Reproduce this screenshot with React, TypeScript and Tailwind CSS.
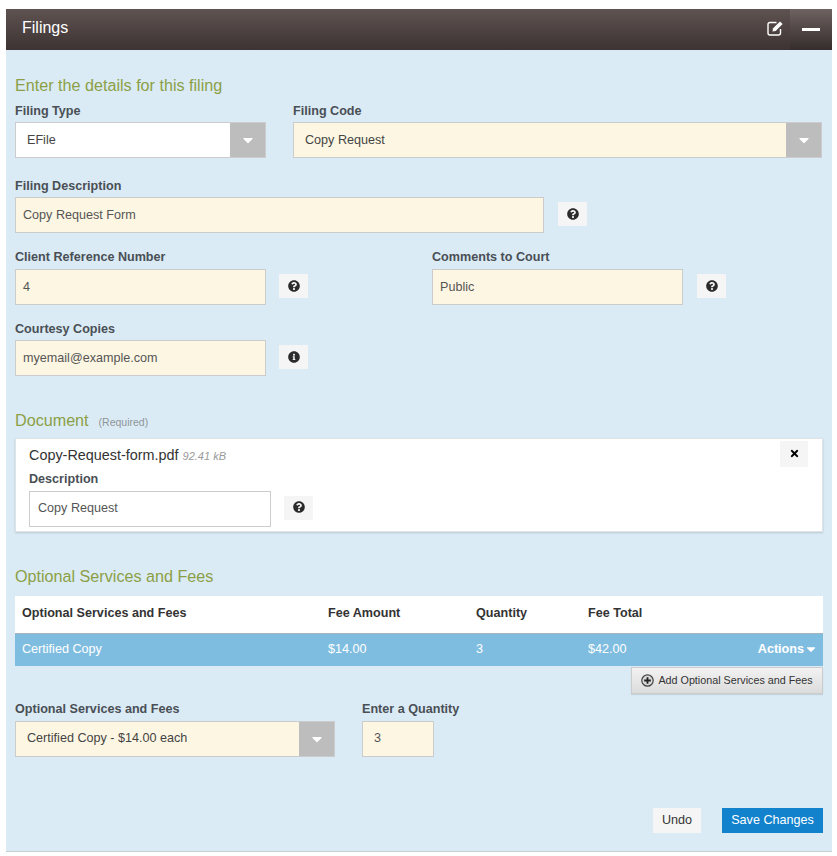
import { ReactNode } from "react";
import { FaQuestionCircle, FaInfoCircle, FaTimes, FaCaretDown } from "react-icons/fa";

const inputBase = "h-[36px] border border-[#cccccc] px-[7px] flex items-center text-[12.6px] text-[#555555]";

function Label({ children }: { children: ReactNode }) {
  return <div className="h-[24px] leading-[26px] text-[12.6px] font-bold text-[#4a4f55]">{children}</div>;
}

function SelectBox({ value, cream, className }: { value: string; cream?: boolean; className: string }) {
  return (
    <div className={`h-[36px] border border-[#cccccc] flex ${cream ? "bg-[#fdf6e3]" : "bg-white"} ${className}`}>
      <div className="flex-1 pl-[11px] flex items-center text-[12.6px] text-[#444444]">{value}</div>
      <div className="w-[35px] bg-[#bdbdbd] flex items-center justify-center">
        <FaCaretDown className="text-white w-[16px] h-[16px]" />
      </div>
    </div>
  );
}

function Help({ info }: { info?: boolean }) {
  return (
    <div className="mt-[5px] w-[29px] h-[24px] pb-[1px] bg-[#f5f5f5] flex items-center justify-center text-[#2b2b2b]">
      {info ? <FaInfoCircle className="w-[12px] h-[12px]" /> : <FaQuestionCircle className="w-[12px] h-[12px]" />}
    </div>
  );
}

function SectionTitle({ children }: { children: ReactNode }) {
  return <div className="text-[16.15px] h-[20px] leading-[20px] text-[#8c9f45]">{children}</div>;
}

function EditIcon() {
  return (
    <svg width="17" height="16" viewBox="0 0 17 16" fill="none" className="mr-[6px] mb-[4px]">
      <path d="M9.5 2.5H3a2 2 0 0 0-2 2v8.5a2 2 0 0 0 2 2h8.5a2 2 0 0 0 2-2V9" stroke="white" strokeWidth="1.4" />
      <path d="M5.5 11.5l.6-3.2L13 1.4l2.6 2.6-6.9 6.9z" fill="white" />
    </svg>
  );
}

export default function App() {
  return (
    <div className="bg-white min-h-[856px] pt-[9px] pl-[6px] font-['Liberation_Sans',Arial,sans-serif]">
      <div className="w-[826px]">
        {/* Header */}
        <div className="h-[41px] flex items-center bg-gradient-to-b from-[#5f5351] to-[#3c3332]">
          <div className="flex-1 pl-[16px] pb-[4px] text-[16px] text-white">Filings</div>
          <EditIcon />
          <div className="w-[42px] h-full pb-[1px] flex items-center justify-center bg-gradient-to-b from-[#6e6361] to-[#352d2c]">
            <div className="w-[18px] h-[3px] bg-white" />
          </div>
        </div>

        {/* Body */}
        <div className="bg-[#daebf5] border-b border-[#c8cfd3] h-[802px] pt-[25px] pl-[9px] pr-[9px]">
          <SectionTitle>Enter the details for this filing</SectionTitle>

          <div className="mt-[3px] flex gap-[27px]">
            <div>
              <Label>Filing Type</Label>
              <SelectBox value="EFile" className="w-[251px]" />
            </div>
            <div className="w-[529px]">
              <Label>Filing Code</Label>
              <SelectBox value="Copy Request" cream className="w-full" />
            </div>
          </div>

          <div className="mt-[15px]">
            <Label>Filing Description</Label>
            <div className="flex gap-[14px]">
              <div className={`${inputBase} bg-[#fdf6e3] w-[529px]`}>Copy Request Form</div>
              <Help />
            </div>
          </div>

          <div className="mt-[11px] flex">
            <div className="w-[417px]">
              <div className="pb-[1px]">
                <Label>Client Reference Number</Label>
              </div>
              <div className="flex gap-[13px]">
                <div className={`${inputBase} bg-[#fdf6e3] w-[251px]`}>4</div>
                <Help />
              </div>
            </div>
            <div>
              <div className="pb-[1px]">
                <Label>Comments to Court</Label>
              </div>
              <div className="flex gap-[14px]">
                <div className={`${inputBase} bg-[#fdf6e3] w-[251px]`}>Public</div>
                <Help />
              </div>
            </div>
          </div>

          <div className="mt-[11px]">
            <Label>Courtesy Copies</Label>
            <div className="flex gap-[13px]">
              <div className={`${inputBase} bg-[#fdf6e3] w-[251px]`}>myemail@example.com</div>
              <Help info />
            </div>
          </div>

          {/* Document */}
          <div className="mt-[34px] flex items-baseline gap-[10px]">
            <SectionTitle>Document</SectionTitle>
            <span className="text-[10.5px] text-[#8f9599]">(Required)</span>
          </div>
          <div className="mt-[7px] h-[94px] bg-white border border-[#dde3e7] shadow-[0_1px_2px_rgba(0,0,0,0.15)] relative pl-[13px] pt-[6px]">
            <div className="h-[20px] leading-[20px] text-[14.4px] text-[#333333]">
              Copy-Request-form.pdf <i className="text-[11px] text-[#9a9a9a]">92.41 kB</i>
            </div>
            <div className="h-[26px] leading-[28px] text-[12.6px] font-bold text-[#4a4f55]">Description</div>
            <div className="flex gap-[13px]">
              <div className={`${inputBase} bg-white w-[242px] px-[8px]`}>Copy Request</div>
              <Help />
            </div>
            <div className="absolute top-[2px] right-[14px] w-[28px] h-[26px] bg-[#f5f5f5] flex items-center justify-center">
              <FaTimes className="w-[11px] h-[11px] text-black" />
            </div>
          </div>

          {/* Fees */}
          <div className="mt-[34px]">
            <SectionTitle>Optional Services and Fees</SectionTitle>
          </div>
          <div className="mt-[10px]">
            <div className="h-[37px] pb-[2px] bg-white flex items-center text-[12.6px] font-bold text-[#333333]">
              <div className="w-[313px] pl-[7px]">Optional Services and Fees</div>
              <div className="w-[148px]">Fee Amount</div>
              <div className="w-[112px]">Quantity</div>
              <div>Fee Total</div>
            </div>
            <div className="h-[33px] pb-[1px] bg-[#7fbde0] border-t border-[#a9b4ba] flex items-center text-[12.6px] text-white">
              <div className="w-[313px] pl-[7px]">Certified Copy</div>
              <div className="w-[148px]">$14.00</div>
              <div className="w-[112px]">3</div>
              <div className="flex-1">$42.00</div>
              <div className="flex items-center pr-[5px] font-bold">
                Actions
                <FaCaretDown className="w-[14px] h-[14px]" />
              </div>
            </div>
            <div className="flex justify-end">
              <div className="mt-[1px] w-[192px] h-[27px] border border-[#cccccc] bg-gradient-to-b from-[#f2f2f2] to-[#dcdcdc] flex items-center justify-center gap-[4px] text-[10.75px] text-[#333333] shadow-[0_1px_1px_rgba(0,0,0,0.1)]">
                <svg width="13" height="13" viewBox="0 0 13 13" fill="none">
                  <circle cx="6.5" cy="6.5" r="5.7" stroke="#444444" strokeWidth="1.2" fill="#d8d8d8" />
                  <path d="M6.5 3.2v6.6M3.2 6.5h6.6" stroke="#222222" strokeWidth="1.8" />
                </svg>
                Add Optional Services and Fees
              </div>
            </div>
          </div>

          <div className="mt-[2px] flex gap-[27px]">
            <div>
              <div className="pb-[1px]">
                <Label>Optional Services and Fees</Label>
              </div>
              <SelectBox value="Certified Copy - $14.00 each" cream className="w-[320px]" />
            </div>
            <div>
              <div className="pb-[1px]">
                <Label>Enter a Quantity</Label>
              </div>
              <div className={`${inputBase} bg-[#fdf6e3] w-[72px] pl-[11px]`}>3</div>
            </div>
          </div>

          {/* Footer */}
          <div className="mt-[51px] flex justify-end gap-[21px] text-[12.6px]">
            <div className="w-[48px] h-[25px] bg-[#f5f5f5] flex items-center justify-center text-[#333333]">Undo</div>
            <div className="w-[101px] h-[25px] bg-[#1282cd] flex items-center justify-center text-white">Save Changes</div>
          </div>
        </div>
      </div>
    </div>
  );
}
